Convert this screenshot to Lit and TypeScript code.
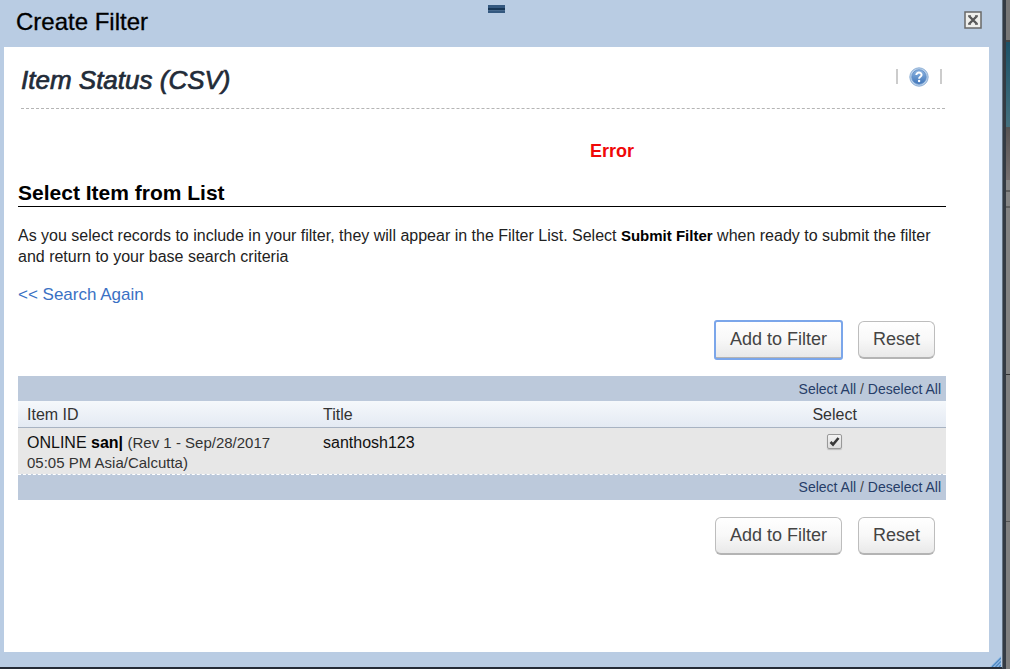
import { LitElement, html, css } from "lit";
import { customElement, property, state } from "lit/decorators.js";

interface Item {
  kind: string;
  id: string;
  revision: string;
  title: string;
  selected: boolean;
}

@customElement("filter-actions")
class FilterActions extends LitElement {
  @property({ type: Boolean }) active = false;

  static styles = css`
    :host {
      display: flex;
      justify-content: flex-end;
      gap: 16px;
      padding-right: 11px;
    }
    .btn {
      box-sizing: border-box;
      height: 38px;
      padding: 0 14px;
      border: 1px solid #bdbdbd;
      border-bottom: 2px solid #b4b4b4;
      border-radius: 6px;
      background: linear-gradient(#ffffff, #f8f8f8 50%, #e9e9e9);
      color: #444;
      font: 18px "Liberation Sans", Arial, sans-serif;
    }
    .active {
      outline: 2px solid #7ba6ea;
      outline-offset: -1px;
      border-radius: 2px;
    }
  `;

  render() {
    return html`
      <button type="button" class="btn ${this.active ? "active" : ""}">Add to Filter</button>
      <button type="button" class="btn">Reset</button>
    `;
  }
}

@customElement("app-root")
class AppRoot extends LitElement {
  @state() private items: Item[] = [
    {
      kind: "ONLINE",
      id: "san|",
      revision: "(Rev 1 - Sep/28/2017 05:05 PM Asia/Calcutta)",
      title: "santhosh123",
      selected: true,
    },
  ];

  static styles = css`
    :host {
      display: grid;
      grid-template-columns: minmax(0, 1fr) 7px;
      min-height: 100vh;
      color: #000;
      font-family: "Liberation Sans", Arial, sans-serif;
    }
    .dialog {
      display: flex;
      flex-direction: column;
      position: relative;
      box-sizing: border-box;
      padding: 0 13px 15px 4px;
      background: #b9cce3;
      border-right: 1px solid #62707f;
      border-bottom: 2px solid #252b36;
    }
    .backdrop {
      border-left: 3px solid #343b44;
      background: linear-gradient(
        #777 0 40px, #444 40px 42px, #1d5268 42px, #45717f 127px,
        #555 127px 129px, #595555 129px, #766f6f 180px,
        #888 180px 190px, #5e5e5e 190px 192px, #858585 192px 206px,
        #606060 206px 208px, #838383 208px 374px, #333 374px 375px,
        #808080 375px 521px, #555 521px 522px, #808080 522px
      );
    }
    .titlebar {
      display: flex;
      justify-content: space-between;
      align-items: center;
      height: 47px;
      padding: 0 7px 0 12px;
      box-sizing: border-box;
    }
    .title {
      margin: 0;
      padding-bottom: 3px;
      font-size: 24px;
      line-height: 28px;
      font-weight: 400;
      -webkit-text-stroke: 0.3px #000;
    }
    .close {
      display: block;
      width: 18px;
      height: 18px;
      margin-bottom: 7px;
      padding: 0;
      border: 0;
      background: none;
    }
    .icon {
      display: block;
    }
    .grip {
      position: absolute;
      top: 5px;
      left: calc(50% - 13px);
      width: 17px;
      height: 8px;
      background: linear-gradient(#34587f 0 3px, #173656 3px 5px, #47698e 5px 6px, #34587f 6px);
    }
    .resize {
      position: absolute;
      right: 1px;
      bottom: 0;
    }
    .content {
      flex: 1;
      padding: 14px 43px 24px 14px;
      background: #fff;
    }
    .page-head {
      display: flex;
      justify-content: space-between;
      align-items: center;
      height: 47px;
      margin: 0 1px 0 3px;
      padding-right: 3px;
      border-bottom: 1px dashed #b5b5b5;
    }
    .page-title {
      margin: 0;
      padding-bottom: 10px;
      color: #222b38;
      font-size: 26px;
      line-height: 32px;
      font-weight: 400;
      font-style: italic;
      -webkit-text-stroke: 0.7px #222b38;
    }
    .tools {
      display: flex;
      align-items: center;
      gap: 11px;
      padding-bottom: 16px;
    }
    .bar {
      width: 2px;
      height: 15px;
      background: #ccc;
    }
    .help {
      display: block;
    }
    .error {
      margin: 31px 0 0;
      padding-left: 28%;
      text-align: center;
      color: #f00808;
      font-size: 18px;
      line-height: 22px;
      font-weight: 700;
    }
    .section {
      margin: 18px 0 0;
      border-bottom: 1px solid #000;
      font-size: 21px;
      line-height: 26px;
      font-weight: 700;
    }
    .intro {
      margin: 18px 0 0;
      color: #222;
      font-size: 16px;
      line-height: 21px;
    }
    .strong {
      color: #000;
      font-size: 15px;
      line-height: 1;
    }
    .item-id {
      color: #000;
    }
    .again {
      display: inline-block;
      margin: 18px 0 16px;
      color: #3a71c4;
      font-size: 17px;
      line-height: 20px;
      text-decoration: none;
    }
    .list {
      width: 100%;
      margin: 17px 0;
      border-collapse: collapse;
      table-layout: fixed;
      color: #333;
      font-size: 16px;
      line-height: 20px;
      text-align: left;
    }
    .col-id {
      width: 296px;
    }
    .col-select {
      width: 24%;
    }
    .band {
      height: 25px;
      padding: 0 5px 0 0;
      background: #bcc9db;
      color: #444;
      font-size: 14px;
      text-align: right;
    }
    .band-link {
      color: #263d68;
      text-decoration: none;
    }
    .heading {
      height: 26px;
      box-sizing: border-box;
      padding: 3px 9px 0;
      border-bottom: 1px solid #a8b3c2;
      background: linear-gradient(#f5f8fb, #e4eaf3);
      font-weight: 400;
    }
    .cell {
      padding: 5px 9px 1px;
      border-bottom: 1px dashed #fff;
      background: #e7e7e7;
      color: #111;
      vertical-align: top;
    }
    .center {
      text-align: center;
    }
    .rev {
      color: #333;
      font-size: 15px;
    }
    .check {
      appearance: none;
      display: block;
      width: 15px;
      height: 15px;
      margin: 1px auto 0;
      border: 1px solid #999;
      border-radius: 2px;
      background: linear-gradient(#f3f3f3, #dcdcdc);
      box-shadow: 0 1px 1px #bbb;
    }
    .check:checked {
      background: url("data:image/svg+xml,%3Csvg xmlns='http://www.w3.org/2000/svg' viewBox='0 0 13 13'%3E%3Cpath d='M2.5 7 5 9.5 10.5 3' fill='none' stroke='%23383838' stroke-width='2.6'/%3E%3C/svg%3E") center / 13px,
        linear-gradient(#f3f3f3, #dcdcdc);
    }
  `;

  private setAll(e: Event, selected: boolean) {
    e.preventDefault();
    this.items = this.items.map((i) => ({ ...i, selected }));
  }

  private band() {
    return html`<tr>
      <td class="band" colspan="3"><a class="band-link" href="#" @click=${(e: Event) => this.setAll(e, true)}>Select All</a> / <a class="band-link" href="#" @click=${(e: Event) => this.setAll(e, false)}>Deselect All</a></td>
    </tr>`;
  }

  render() {
    return html`
      <main class="dialog">
        <header class="titlebar">
          <h1 class="title">Create Filter</h1>
          <button class="close" type="button" aria-label="Close">
            <svg class="icon" width="18" height="18" viewBox="0 0 18 18">
              <rect x="1" y="1" width="16" height="16" fill="#efefec" stroke="#686868" stroke-width="1.5" />
              <path d="M5 5 13 13M13 5 5 13" stroke="#575757" stroke-width="2.4" />
              <path d="M4 5h3M11 5h3M4 13h3M11 13h3" stroke="#666" stroke-width="1.4" />
            </svg>
          </button>
        </header>
        <div class="grip"></div>
        <section class="content">
          <div class="page-head">
            <h2 class="page-title">Item Status (CSV)</h2>
            <div class="tools">
              <span class="bar"></span>
              <a class="help" href="#" aria-label="Help">
                <svg class="icon" width="20" height="20" viewBox="0 0 20 20">
                  <defs>
                    <linearGradient id="g" x1="0" y1="0" x2="0" y2="1">
                      <stop offset="0" stop-color="#8fb6e2" />
                      <stop offset="1" stop-color="#3e74b8" />
                    </linearGradient>
                  </defs>
                  <circle cx="10" cy="10" r="9.2" fill="#b7cfe9" stroke="#8fb0d6" stroke-width="1" />
                  <circle cx="10" cy="10" r="7.2" fill="url(#g)" stroke="#5d8cc6" stroke-width="0.8" />
                  <path d="M7.3 8.1C7.3 4.6 12.8 4.8 12.6 8 12.5 9.8 10.1 9.7 10.1 11.7" fill="none" stroke="#fff" stroke-width="2" />
                  <circle cx="10.1" cy="14" r="1.2" fill="#fff" />
                </svg>
              </a>
              <span class="bar"></span>
            </div>
          </div>
          <p class="error" role="alert">Error</p>
          <h3 class="section">Select Item from List</h3>
          <p class="intro">
            As you select records to include in your filter, they will appear in the Filter List. Select
            <strong class="strong">Submit Filter</strong> when ready to submit the filter and return to your base search criteria
          </p>
          <a class="again" href="#">&lt;&lt; Search Again</a>
          <filter-actions active></filter-actions>
          <table class="list">
            <colgroup>
              <col class="col-id" />
              <col />
              <col class="col-select" />
            </colgroup>
            <thead>
              ${this.band()}
              <tr>
                <th class="heading" scope="col">Item ID</th>
                <th class="heading" scope="col">Title</th>
                <th class="heading center" scope="col">Select</th>
              </tr>
            </thead>
            <tbody>
              ${this.items.map(
                (item) => html`<tr>
                  <td class="cell">${item.kind} <b class="item-id">${item.id}</b> <span class="rev">${item.revision}</span></td>
                  <td class="cell">${item.title}</td>
                  <td class="cell">
                    <input class="check" type="checkbox" aria-label="Select ${item.title}" .checked=${item.selected} />
                  </td>
                </tr>`
              )}
            </tbody>
            <tfoot>
              ${this.band()}
            </tfoot>
          </table>
          <filter-actions></filter-actions>
        </section>
        <svg class="resize" width="11" height="11" viewBox="0 0 11 11">
          <path d="M0 11 11 0V11Z" fill="#8db9e6" />
          <path d="M2 11 11 2M5.5 11 11 5.5M9 11 11 9" stroke="#4d86c0" stroke-width="1.2" />
        </svg>
      </main>
      <div class="backdrop"></div>
    `;
  }
}
